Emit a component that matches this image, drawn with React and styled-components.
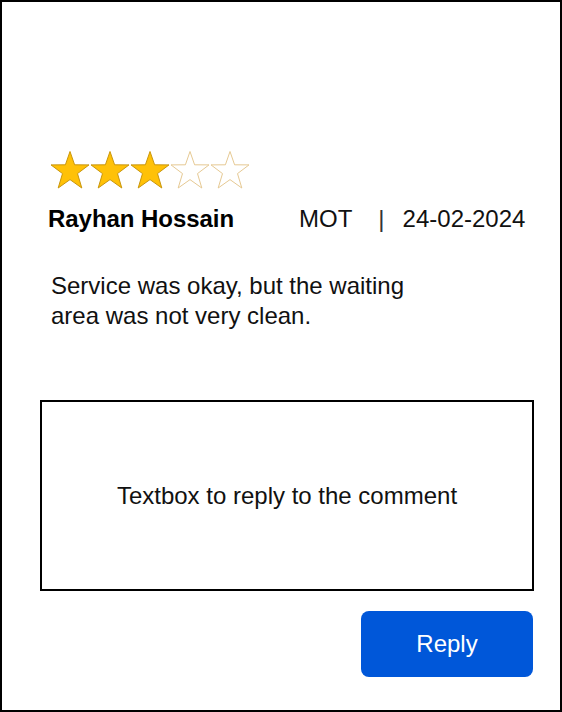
import styled, { createGlobalStyle } from "styled-components";

const GlobalStyle = createGlobalStyle`
  html, body {
    margin: 0;
    padding: 0;
    background: #fff;
  }
  * {
    box-sizing: border-box;
  }
`;

const STAR_POINTS =
  "20,0.5 24.6,13.8 39,13.9 27.5,22.6 31.8,37 20,28.6 8.2,37 12.5,22.6 1,13.9 15.4,13.8";

const Star = ({ filled }) => (
  <StarIcon viewBox="0 0 40 38" filled={filled ? 1 : 0}>
    <polygon points={STAR_POINTS} />
  </StarIcon>
);

export default function App() {
  const rating = 3;

  return (
    <>
      <GlobalStyle />
      <Frame>
        <Stars>
          {[1, 2, 3, 4, 5].map((n) => (
            <Star key={n} filled={n <= rating} />
          ))}
        </Stars>
        <InfoRow>
          <Name>Rayhan Hossain</Name>
          <Meta>
            <span>MOT</span>
            <Divider>|</Divider>
            <span>24-02-2024</span>
          </Meta>
        </InfoRow>
        <Comment>
          Service was okay, but the waiting
          <br />
          area was not very clean.
        </Comment>
        <ReplyBox>Textbox to reply to the comment</ReplyBox>
        <Actions>
          <ReplyButton type="button">Reply</ReplyButton>
        </Actions>
      </Frame>
    </>
  );
}

const Frame = styled.div`
  width: 562px;
  height: 712px;
  border: 2px solid #000;
  padding: 148px 26px 0 38px;
  display: flex;
  flex-direction: column;
  font-family: "Liberation Sans", Arial, sans-serif;
  color: #111;
`;

const Stars = styled.div`
  display: flex;
  margin-left: 10px;
  height: 40px;
  align-items: center;
`;

const StarIcon = styled.svg`
  width: 40px;
  height: 38px;
  display: block;

  polygon {
    fill: ${(p) => (p.filled ? "#FFC107" : "#fff")};
    stroke: ${(p) => (p.filled ? "#C9960C" : "#E6C993")};
    stroke-width: 1;
    stroke-linejoin: round;
  }
`;

const InfoRow = styled.div`
  display: flex;
  align-items: baseline;
  margin-top: 15px;
  padding-left: 8px;
  font-size: 24px;
  line-height: 28px;
`;

const Name = styled.div`
  font-weight: bold;
  color: #000;
  letter-spacing: -0.05px;
`;

const Meta = styled.div`
  margin-left: 65px;
  display: flex;
  align-items: baseline;
  color: #111;
`;

const Divider = styled.span`
  color: #333;
  margin: 0 18px 0 26px;
`;

const Comment = styled.p`
  margin: 38px 0 0 11px;
  font-size: 24px;
  line-height: 30px;
  color: #111;
`;

const ReplyBox = styled.div`
  margin-top: 69px;
  height: 191px;
  border: 2px solid #000;
  display: flex;
  align-items: center;
  justify-content: center;
  font-size: 24px;
  color: #111;
`;

const Actions = styled.div`
  display: flex;
  justify-content: flex-end;
  margin-top: 20px;
`;

const ReplyButton = styled.button`
  width: 172px;
  height: 66px;
  margin-right: 1px;
  border: none;
  border-radius: 8px;
  background: #0057d9;
  color: #fff;
  font-family: "Liberation Sans", Arial, sans-serif;
  font-size: 24px;
  cursor: pointer;
`;
